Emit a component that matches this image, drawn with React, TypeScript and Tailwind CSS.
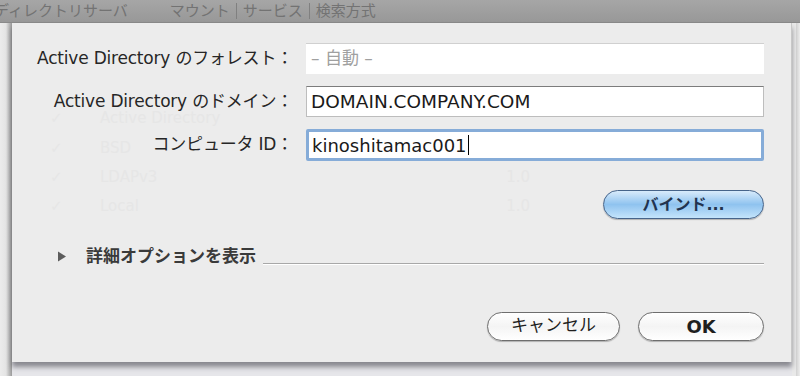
const font = { fontFamily: '"DejaVu Sans", "Noto Sans CJK JP", sans-serif' };

const ghostRows = [
  { name: "Active Directory", ver: "", top: 84 },
  { name: "BSD", ver: "1.5", top: 114 },
  { name: "LDAPv3", ver: "1.0", top: 143 },
  { name: "Local", ver: "1.0", top: 172 },
];

function Label({ children }: { children: React.ReactNode }) {
  return (
    <div className="flex h-[31px] items-center justify-end text-[17px] text-[#262626] tracking-[-0.2px]">
      {children}
    </div>
  );
}

export default function App() {
  return (
    <div
      className="flex h-[376px] w-[800px] flex-col overflow-hidden bg-[#e6e6ea]"
      style={font}
    >
      {/* toolbar tabs behind the sheet */}
      <div className="flex h-[23px] shrink-0 items-center gap-[42px] border-b border-[#8a8a8a] bg-gradient-to-b from-[#a6a6a6] to-[#989898] text-[15px] text-[#737373]">
        <span className="-ml-[6px]">ディレクトリサーバ</span>
        <span className="flex items-center gap-[6px]">
          <span>マウント</span>
          <span className="h-[16px] w-px bg-[#808080]" />
          <span>サービス</span>
          <span className="h-[16px] w-px bg-[#808080]" />
          <span>検索方式</span>
        </span>
      </div>

      <div className="flex flex-1">
        <div className="w-[12px] shrink-0 bg-gradient-to-r from-[#ececec] via-[#e4e4e4] to-[#9a9a9a]" />

        <div className="relative flex h-[339px] w-[780px] shrink-0 flex-col border-r border-[#c8c8c8] bg-[#ececec] shadow-[0_5px_5px_rgba(60,60,70,0.55)]">
          {/* faint list showing through the sheet */}
          <div className="pointer-events-none absolute inset-0 text-[15px] text-[#e6e6e6]">
            {ghostRows.map((r) => (
              <div key={r.name} className="absolute left-[38px] flex w-[480px]" style={{ top: r.top }}>
                <span className="w-[50px]">✓</span>
                <span className="flex-1">{r.name}</span>
                <span>{r.ver}</span>
              </div>
            ))}
          </div>

          <div className="relative grid grid-cols-[281px_458px] gap-x-[13px] gap-y-[12px] pt-[20px]">
            <Label>Active Directory のフォレスト：</Label>
            <div className="flex h-[31px] items-center border-t border-[#d0d0d0] bg-white pl-[5px] text-[17px] text-[#a0a0a0]">
              – 自動 –
            </div>

            <Label>Active Directory のドメイン：</Label>
            <div className="flex h-[31px] items-center border border-[#bdbdbd] border-t-[#7c7c7c] bg-white pl-[4px] text-[18.5px] text-[#1a1a1a]">
              DOMAIN.COMPANY.COM
            </div>

            <Label>コンピュータ ID：</Label>
            <div className="flex h-[32px] items-center rounded-[2px] border-[3px] border-[#86acd8] bg-white pl-[3px] text-[18px] text-[#1a1a1a]">
              kinoshitamac001
              <span className="ml-[1px] h-[20px] w-px bg-black" />
            </div>
          </div>

          <div className="relative mt-[29px] flex justify-end pr-[27px]">
            <button className="flex h-[29px] w-[161px] items-center justify-center rounded-full border border-[#46648a] bg-gradient-to-b from-[#d8ebfb] via-[#8fc3ef] to-[#c4e4fb] text-[16px] font-bold text-[#22334f] shadow-[0_1px_1px_rgba(0,0,0,0.25)]">
              バインド...
            </button>
          </div>

          <div className="relative mt-[25px] flex items-center pr-[27px]">
            <svg width="10" height="11" viewBox="0 0 10 11" className="ml-[45px]">
              <path d="M1 0.5 L9 5.5 L1 10.5 Z" fill="#5c5c5c" />
            </svg>
            <span className="ml-[19px] text-[17px] font-bold text-[#3a3a3a]">詳細オプションを表示</span>
            <div className="ml-[7px] mt-[14px] h-px flex-1 bg-[#a8a8a8] shadow-[0_1px_0_#ffffff]" />
          </div>

          <div className="relative mt-[42px] flex justify-end gap-[18px] pr-[27px]">
            <button className="flex h-[29px] w-[133px] items-center justify-center rounded-full border border-[#6e6e6e] bg-gradient-to-b from-[#ffffff] via-[#f4f4f4] to-[#ffffff] text-[17px] text-[#1e1e1e] shadow-[0_1px_1px_rgba(0,0,0,0.25)]">
              キャンセル
            </button>
            <button className="flex h-[29px] w-[126px] items-center justify-center rounded-full border border-[#6e6e6e] bg-gradient-to-b from-[#ffffff] via-[#f4f4f4] to-[#ffffff] text-[18px] font-bold text-[#1e1e1e] shadow-[0_1px_1px_rgba(0,0,0,0.25)]">
              OK
            </button>
          </div>
        </div>

        <div className="flex-1 border-l-[4px] border-[#e9e9e9] bg-gradient-to-r from-[#d2d2d2] to-[#ececec]" />
      </div>
    </div>
  );
}
